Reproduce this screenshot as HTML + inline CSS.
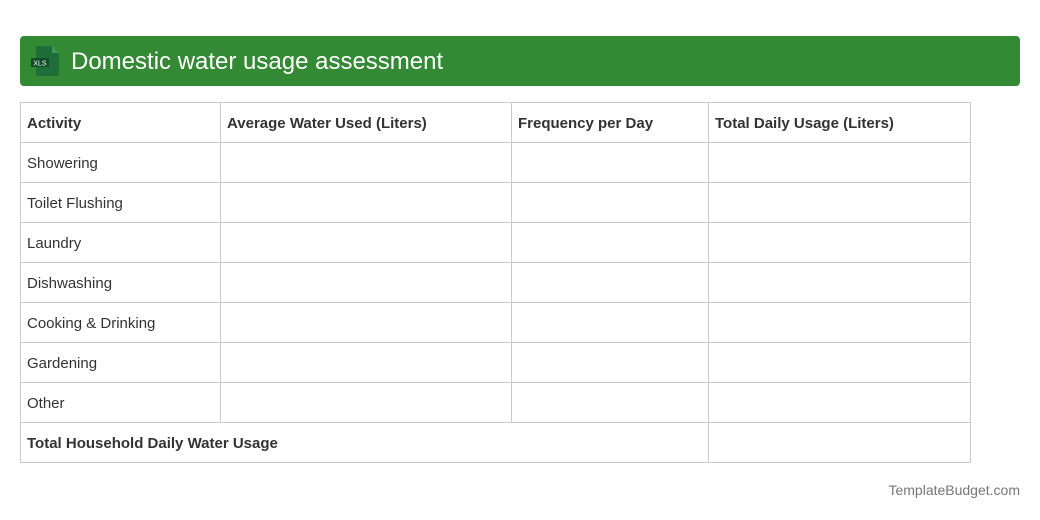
<!DOCTYPE html>
<html><head><style>
body{margin:0;width:1040px;height:520px;background:#fff;font-family:"Liberation Sans",Arial,sans-serif;position:relative;overflow:hidden}
.hdr{position:absolute;left:20px;top:36px;width:1000px;height:50px;background:#348a34;border-radius:4px}
.hdr .t{position:absolute;left:51px;top:1px;line-height:50px;font-size:24px;color:#fff}
table{position:absolute;left:20px;top:102px;border-collapse:collapse;font-size:15px;color:#333}
td{border:1px solid #ccc;height:40px;padding:1px 0 0 6px;box-sizing:border-box;vertical-align:middle}
.b{font-weight:bold}
.f{position:absolute;right:20px;top:482px;font-size:14px;color:#777}
</style></head><body>
<div class="hdr">
<svg style="position:absolute;left:10px;top:9px" width="30" height="32" viewBox="0 0 30 32">
<path d="M6 1H22L29 8V31H6Z" fill="#1f6e3a"/>
<path d="M22 1V8H29Z" fill="#3c9a5c"/>
<rect x="1" y="13" width="18" height="9" fill="#134d28"/>
<text x="10" y="20.5" font-size="7" fill="#fff" text-anchor="middle" font-family="Liberation Sans">XLS</text>
</svg>
<div class="t">Domestic water usage assessment</div>
</div>
<table>
<colgroup><col style="width:200px"><col style="width:291px"><col style="width:197px"><col style="width:262px"></colgroup>
<tr class="b"><td>Activity</td><td>Average Water Used (Liters)</td><td>Frequency per Day</td><td>Total Daily Usage (Liters)</td></tr>
<tr><td>Showering</td><td></td><td></td><td></td></tr>
<tr><td>Toilet Flushing</td><td></td><td></td><td></td></tr>
<tr><td>Laundry</td><td></td><td></td><td></td></tr>
<tr><td>Dishwashing</td><td></td><td></td><td></td></tr>
<tr><td>Cooking &amp; Drinking</td><td></td><td></td><td></td></tr>
<tr><td>Gardening</td><td></td><td></td><td></td></tr>
<tr><td>Other</td><td></td><td></td><td></td></tr>
<tr><td colspan="3" class="b">Total Household Daily Water Usage</td><td></td></tr>
</table>
<div class="f">TemplateBudget.com</div>
</body></html>
